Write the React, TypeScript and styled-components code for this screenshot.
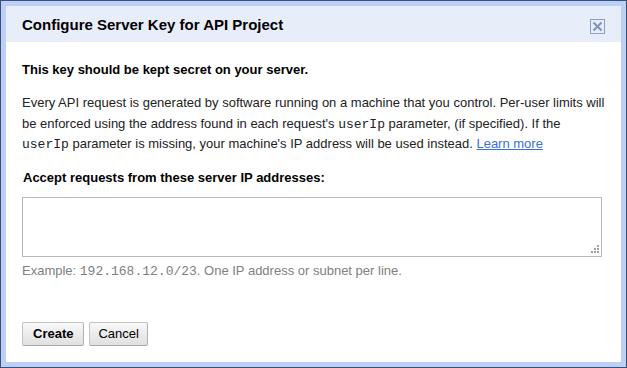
import React from "react";
import styled, { createGlobalStyle } from "styled-components";

const Global = createGlobalStyle`
  html, body { margin: 0; padding: 0; background: #fff; }
  body { font-family: "Liberation Sans", Arial, sans-serif; }
`;

const Frame = styled.div`
  box-sizing: border-box;
  width: 627px;
  height: 368px;
  border: 1px solid #3b4f72;
  padding: 5px;
  background: #bccff8;
`;

const Dialog = styled.div`
  height: 100%;
  background: #fff;
  display: flex;
  flex-direction: column;
`;

const TitleBar = styled.div`
  height: 36px;
  flex: none;
  background: #e8eef9;
  display: flex;
  align-items: center;
  justify-content: space-between;
  padding: 0 16px;
`;

const Title = styled.h1`
  margin: 1px 0 0 0;
  font-size: 15px;
  font-weight: bold;
  color: #000;
`;

const CloseButton = styled.button`
  box-sizing: border-box;
  width: 15px;
  height: 15px;
  margin-top: 4px;
  padding: 0;
  border: 1px solid #8ba0c3;
  background: transparent;
  display: flex;
  align-items: center;
  justify-content: center;
  cursor: pointer;
`;

const Body = styled.div`
  padding: 19px 16px 0 16px;
  display: flex;
  flex-direction: column;
  color: #222;
  font-size: 13px;
`;

const Warning = styled.p`
  margin: 0;
  font-weight: bold;
  color: #000;
  line-height: 18px;
`;

const Para = styled.p`
  margin: 14px 0 0 0;
  line-height: 20.5px;
`;

const Code = styled.code`
  font-family: "Liberation Mono", "Courier New", monospace;
  font-size: 13px;
  line-height: 1;
`;

const Link = styled.a`
  color: #3b6fd6;
  text-decoration: underline;
`;

const Label = styled.label`
  margin: 14px 0 0 1px;
  font-weight: bold;
  color: #000;
  line-height: 18px;
`;

const AreaWrap = styled.div`
  position: relative;
  margin-top: 10px;
  width: 580px;
  height: 60px;
`;

const Area = styled.textarea`
  box-sizing: border-box;
  display: block;
  width: 100%;
  height: 100%;
  margin: 0;
  border: 1px solid #b8b8b8;
  outline: none;
  resize: none;
  font-family: "Liberation Sans", Arial, sans-serif;
  font-size: 13px;
`;

const Grip = styled.svg`
  position: absolute;
  right: 3px;
  bottom: 4px;
  pointer-events: none;
`;

const Hint = styled.p`
  margin: 5px 0 0 0;
  color: #808080;
  line-height: 18px;
`;

const Actions = styled.div`
  display: flex;
  gap: 5px;
  padding: 42px 16px 0 16px;
`;

const Button = styled.button<{ $primary?: boolean }>`
  box-sizing: border-box;
  height: 24px;
  padding: 0 ${(p) => (p.$primary ? 10 : 8)}px;
  border: 1px solid #c4c4c4;
  border-bottom-color: #a8a8a8;
  border-right-color: #b0b0b0;
  border-radius: 2px;
  background: linear-gradient(#f8f8f8, #e0e0e0);
  font-family: "Liberation Sans", Arial, sans-serif;
  font-size: 13px;
  font-weight: ${(p) => (p.$primary ? "bold" : "normal")};
  color: #000;
  cursor: pointer;
`;

export default function App() {
  return (
    <>
      <Global />
      <Frame>
        <Dialog>
          <TitleBar>
            <Title>Configure Server Key for API Project</Title>
            <CloseButton aria-label="Close">
              <svg width="11" height="11" viewBox="0 0 11 11">
                <path d="M1.5 1.5 L9.5 9.5 M9.5 1.5 L1.5 9.5" stroke="#7d93b8" strokeWidth="2" />
              </svg>
            </CloseButton>
          </TitleBar>
          <Body>
            <Warning>This key should be kept secret on your server.</Warning>
            <Para>
              Every API request is generated by software running on a machine that you control. Per-user limits will
              be enforced using the address found in each request's <Code>userIp</Code> parameter, (if specified). If the{" "}
              <Code>userIp</Code> parameter is missing, your machine's IP address will be used instead.{" "}
              <Link href="#">Learn more</Link>
            </Para>
            <Label>Accept requests from these server IP addresses:</Label>
            <AreaWrap>
              <Area />
              <Grip width="9" height="9" viewBox="0 0 9 9">
                <g fill="#a0a0a0">
                  <rect x="7" y="1" width="2" height="2" />
                  <rect x="4" y="4" width="2" height="2" />
                  <rect x="7" y="4" width="2" height="2" />
                  <rect x="1" y="7" width="2" height="2" />
                  <rect x="4" y="7" width="2" height="2" />
                  <rect x="7" y="7" width="2" height="2" />
                </g>
              </Grip>
            </AreaWrap>
            <Hint>
              Example: <Code>192.168.12.0/23</Code>. One IP address or subnet per line.
            </Hint>
          </Body>
          <Actions>
            <Button $primary>Create</Button>
            <Button>Cancel</Button>
          </Actions>
        </Dialog>
      </Frame>
    </>
  );
}
